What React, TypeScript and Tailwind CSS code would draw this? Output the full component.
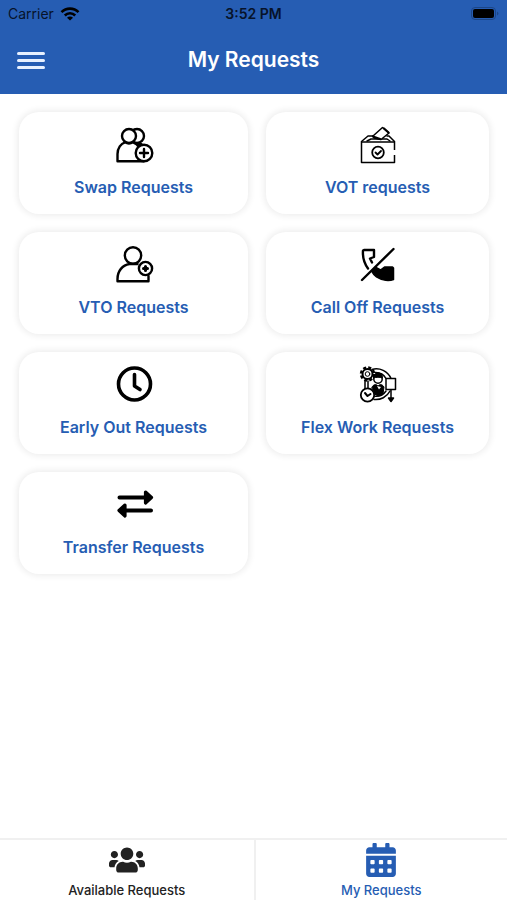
import React from "react";
import { FaUsers, FaCalendarAlt } from "react-icons/fa";

type IconProps = { children: React.ReactNode; width?: number };

function Icon({ children, width = 2.4 }: IconProps) {
  return (
    <svg
      className="h-10 w-10"
      viewBox="0 0 40 40"
      fill="none"
      stroke="#000"
      strokeWidth={width}
      strokeLinejoin="round"
      strokeLinecap="round"
      aria-hidden="true"
    >
      {children}
    </svg>
  );
}

const SwapIcon = () => (
  <Icon>
    <circle cx="23" cy="12" r="7" />
    <path d="M20 20h7l4 3-8 4z" fill="#000" />
    <circle cx="15" cy="12" r="7" fill="#fff" />
    <path
      d="M30 37.200H3.500V30c0-6 3.500-10.500 7.500-11.700 2.500 1.500 5.500 1.500 8 0 3 1 5 3 6 5z"
      fill="#fff"
    />
    <circle cx="30" cy="29" r="8.300" fill="#fff" />
    <path d="M30 25v8M26 29h8" />
  </Icon>
);

const VoteIcon = () => (
  <Icon width={1.5}>
    <path d="M36.500 26v-8H3.500v20.500h33V31" strokeLinecap="butt" />
    <path d="M3.500 17.500 10 12h5M29 12h2l5.500 5.500M9 17l4-2h16l3 2" />
    <path d="M24.500 3.500 31 9l-8 6.500-7-1.500-1-2z" fill="#fff" />
    <path d="m26 4.500 4.500 4M15 12.500l7 2.500" strokeWidth="2.200" />
    <circle cx="20" cy="28.500" r="5.800" strokeWidth="1.800" />
    <path d="m17.500 28.500 2 2 3.500-3.500" strokeWidth="1.800" />
  </Icon>
);

const PersonAddIcon = () => (
  <Icon>
    <circle cx="19" cy="11.500" r="8.200" />
    <path d="M34.500 32v5.300h-31V35c0-8 5-14 12-15h8" />
    <circle cx="31.500" cy="24.500" r="6.600" fill="#fff" />
    <path d="M31.500 22.500v4M29.500 24.500h4" strokeWidth="3" />
  </Icon>
);

const CallOffIcon = () => (
  <Icon>
    <path d="M10 24.500C6 19 4.500 13 5 6.500l1-.500h10v7l-4 1.500 2 4" />
    <path
      d="m18 23.500 4.500 2.500 4-3h8l1 1v11.500c-4 1.500-11 1.500-17-2.500-2-1.500-4-4-5-6z"
      fill="#000"
      strokeWidth="1.500"
    />
    <path d="M4 36 35.500 5" />
  </Icon>
);

const ClockIcon = () => (
  <Icon width={3.6}>
    <circle cx="20.500" cy="20" r="16" />
    <path d="M20.500 10.500V22l5.500 3.500" />
  </Icon>
);

const FlexIcon = () => (
  <Icon width={1.5}>
    <path d="M14 5.500a16 16 0 0 1 19 9M32 27a16 16 0 0 1-16 8.500M17 8.500a12 12 0 0 1 11 6M28 27a12 12 0 0 1-12 5M7 17v8M10 17v7" />
    <circle cx="9.500" cy="10" r="6.500" strokeWidth="2.500" strokeDasharray="3 2.100" strokeLinecap="butt" />
    <circle cx="9.500" cy="10" r="5" fill="#fff" strokeWidth="2" />
    <circle cx="9.500" cy="10" r="2.300" strokeWidth="1" />
    <circle cx="20" cy="15" r="4.200" fill="#fff" />
    <path d="M15.500 14c0-7 9-7 9 0-3-1-6-1-9 0z" fill="#000" strokeWidth="1" />
    <path d="M14 23c2-3 4-3 6-1 2-2 4-2 6 1l-1 7-5 2-5-3z" fill="#000" strokeWidth="1" />
    <path d="m19 22 2 3.500 2-2.500z" fill="#fff" stroke="none" />
    <circle cx="9.500" cy="31" r="6.700" fill="#fff" strokeWidth="1.800" />
    <path d="m7 29 2.500 3 3-2" strokeWidth="2" />
    <path d="M28 14.500h9.500v11H28z" fill="#fff" />
    <path d="M33 26v8" />
    <path d="M30.500 34h5L33 37.500z" fill="#000" />
  </Icon>
);

const TransferIcon = () => (
  <Icon width={4}>
    <path d="M5.500 13.500H31M37 26.500H12" />
    <path d="m31.500 8 6 5.500-6 5.500zM11 21l-6 5.500 6 5.500z" fill="#000" strokeWidth="3.200" />
  </Icon>
);

const requests = [
  { label: "Swap Requests", icon: SwapIcon },
  { label: "VOT requests", icon: VoteIcon },
  { label: "VTO Requests", icon: PersonAddIcon },
  { label: "Call Off Requests", icon: CallOffIcon },
  { label: "Early Out Requests", icon: ClockIcon },
  { label: "Flex Work Requests", icon: FlexIcon },
  { label: "Transfer Requests", icon: TransferIcon },
];

function StatusBar() {
  return (
    <div className="grid h-7 grid-cols-3 items-center px-2 text-sm leading-7 text-[#07132a]">
      <div className="flex items-center gap-1.5">
        <span>Carrier</span>
        <svg className="h-3.5 w-5" viewBox="0 0 20 14" fill="none" stroke="#000" strokeWidth="2.600" aria-hidden="true">
          <path d="M1.500 5.200a12 12 0 0 1 17 0M4.800 8.500a7.300 7.300 0 0 1 10.400 0" />
          <path d="M10 13.500 7 10.800a4.200 4.200 0 0 1 6 0z" fill="#000" stroke="none" />
        </svg>
      </div>
      <span className="text-center font-semibold">3:52 PM</span>
      <svg className="h-3.5 w-7 justify-self-end" viewBox="0 0 28 14" aria-hidden="true">
        <rect x="0.500" y="0.500" width="24" height="12" rx="3.500" fill="none" stroke="#1c4687" />
        <rect x="2" y="2" width="21" height="9" rx="2" fill="#000" />
        <path d="M26 4.500v4c2-1 2-3 0-4z" fill="#1c4687" />
      </svg>
    </div>
  );
}

export default function App() {
  return (
    <div className="flex min-h-screen flex-col bg-white font-['Inter',sans-serif]">
      <header className="bg-[#265db3] pb-2.5">
        <StatusBar />
        <div className="grid h-14 grid-cols-[1fr_auto_1fr] items-center px-[17px] pt-2">
          <button type="button" aria-label="Open menu" className="flex h-7 w-7 flex-col justify-center gap-1">
            <span className="h-[3px] w-full rounded-full bg-[#e8f1ff]" />
            <span className="h-[3px] w-full rounded-full bg-[#e8f1ff]" />
            <span className="h-[3px] w-full rounded-full bg-[#e8f1ff]" />
          </button>
          <h1 className="text-[21px] leading-8 font-semibold text-white">My Requests</h1>
        </div>
      </header>

      <main className="grid flex-1 grid-cols-[229fr_223fr] content-start gap-[18px] pt-[18px] pr-[18px] pb-6 pl-[19px]">
        {requests.map(({ label, icon: RequestIcon }) => (
          <button
            key={label}
            type="button"
            className="flex flex-col items-center gap-[11px] rounded-[20px] bg-white pt-3 pb-[15px] text-base leading-6 font-semibold text-[#265db3] shadow-[0_0_6px_2px_rgba(0,0,0,0.07)]"
          >
            <RequestIcon />
            <span>{label}</span>
          </button>
        ))}
      </main>

      <nav className="grid grid-cols-2 border-t-2 border-[#f0f0f0] text-[13px] leading-5 font-medium">
        <a href="#available" className="flex flex-col items-center gap-0.5 pt-0.5 text-[#222]">
          <FaUsers className="h-9 w-9" aria-hidden="true" />
          <span>Available Requests</span>
        </a>
        <a
          href="#mine"
          aria-current="page"
          className="flex flex-col items-center gap-0.5 border-l-2 border-[#f0f0f0] pt-0.5 text-[#265db3]"
        >
          <span className="flex h-9 items-center">
            <FaCalendarAlt className="h-[34px] w-[34px]" aria-hidden="true" />
          </span>
          <span>My Requests</span>
        </a>
      </nav>
    </div>
  );
}
